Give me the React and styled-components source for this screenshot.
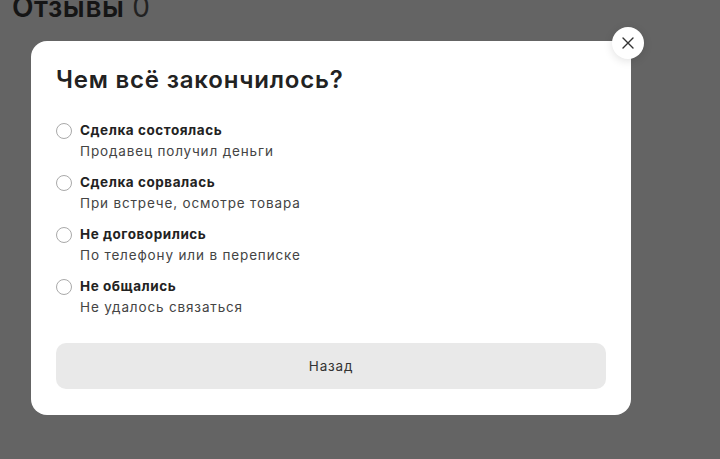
import React from "react";
import styled, { createGlobalStyle } from "styled-components";

const Global = createGlobalStyle`
  html, body { margin: 0; padding: 0; }
  body {
    width: 720px;
    height: 459px;
    overflow: hidden;
    background: #646464;
    font-family: Inter, "Noto Sans", sans-serif;
  }
`;

const Page = styled.div`
  position: relative;
  width: 720px;
  height: 459px;
  background: #646464;
  overflow: hidden;
`;

const PageTitle = styled.h1`
  margin: 0;
  padding: 0 0 0 12px;
  font-size: 28px;
  line-height: 14px;
  font-weight: 600;
  color: #151515;
  letter-spacing: 0.6px;
  white-space: nowrap;
`;

const Count = styled.span`
  font-weight: 400;
  color: #222;
`;

const Modal = styled.div`
  position: absolute;
  left: 31px;
  top: 41px;
  width: 600px;
  height: 374px;
  box-sizing: border-box;
  background: #fff;
  border-radius: 16px;
  padding: 24px 25px 26px;
  display: flex;
  flex-direction: column;
`;

const Close = styled.button`
  position: absolute;
  right: -13px;
  top: -14px;
  width: 32px;
  height: 32px;
  border-radius: 50%;
  border: none;
  background: #fff;
  box-shadow: 0 2px 10px rgba(0, 0, 0, 0.12);
  display: flex;
  align-items: center;
  justify-content: center;
  padding: 0;
  cursor: pointer;
`;

const Title = styled.h2`
  margin: 0 0 25px;
  font-size: 24px;
  line-height: 30px;
  font-weight: 600;
  color: #222;
  letter-spacing: 0.8px;
`;

const Options = styled.div`
  display: flex;
  flex-direction: column;
  gap: 11px;
`;

const Option = styled.label`
  display: flex;
  gap: 8px;
  align-items: flex-start;
  cursor: pointer;
`;

const Radio = styled.span`
  flex: none;
  width: 16px;
  height: 16px;
  box-sizing: border-box;
  border: 1px solid #a9a9a9;
  border-radius: 50%;
  margin-top: 3px;
`;

const Texts = styled.div`
  display: flex;
  flex-direction: column;
  gap: 1px;
`;

const Label = styled.span`
  font-size: 13.5px;
  line-height: 20px;
  font-weight: 700;
  color: #222;
  letter-spacing: 0.55px;
`;

const Hint = styled.span`
  font-size: 13.5px;
  line-height: 20px;
  font-weight: 400;
  color: #444;
  letter-spacing: 0.85px;
`;

const Back = styled.button`
  margin-top: auto;
  width: 100%;
  height: 46px;
  border: none;
  border-radius: 10px;
  background: #e9e9e9;
  font-family: inherit;
  font-size: 13.5px;
  letter-spacing: 0.8px;
  color: #333;
  cursor: pointer;
`;

const options = [
  ["Сделка состоялась", "Продавец получил деньги"],
  ["Сделка сорвалась", "При встрече, осмотре товара"],
  ["Не договорились", "По телефону или в переписке"],
  ["Не общались", "Не удалось связаться"],
];

export default function App() {
  return (
    <Page>
      <Global />
      <PageTitle>
        Отзывы <Count>0</Count>
      </PageTitle>
      <Modal>
        <Close aria-label="Закрыть">
          <svg width="12" height="12" viewBox="0 0 12 12">
            <path d="M1 1L11 11M11 1L1 11" stroke="#333" strokeWidth="1.4" strokeLinecap="round" />
          </svg>
        </Close>
        <Title>Чем всё закончилось?</Title>
        <Options>
          {options.map(([l, h]) => (
            <Option key={l}>
              <Radio />
              <Texts>
                <Label>{l}</Label>
                <Hint>{h}</Hint>
              </Texts>
            </Option>
          ))}
        </Options>
        <Back>Назад</Back>
      </Modal>
    </Page>
  );
}
